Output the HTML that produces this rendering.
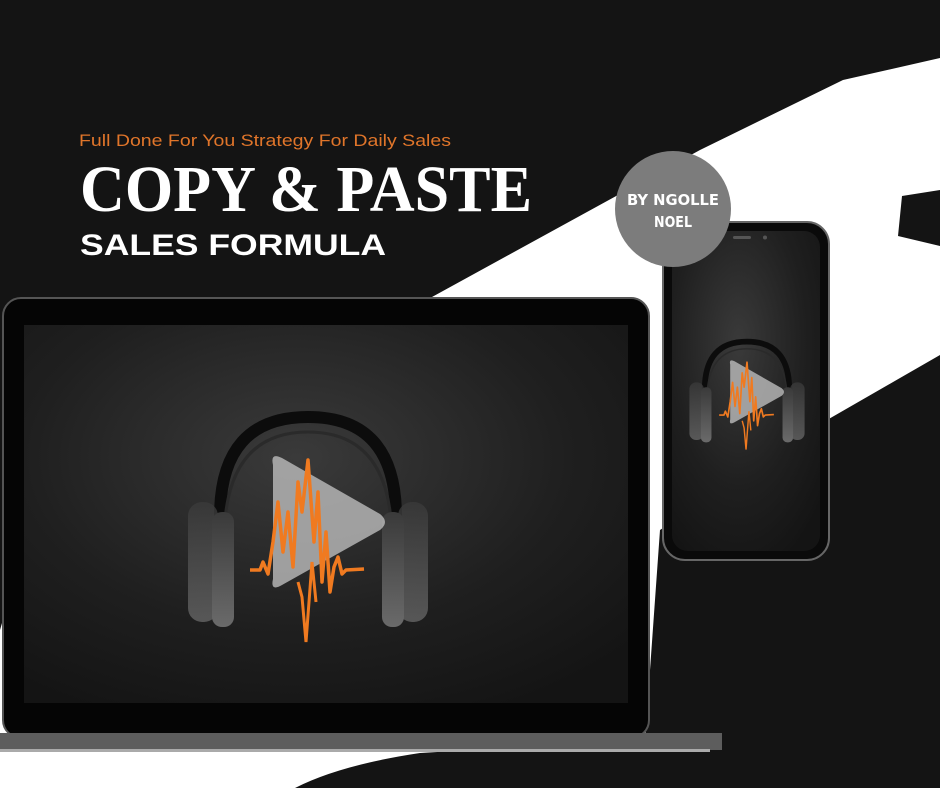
<!DOCTYPE html>
<html><head><meta charset="utf-8"><style>
html,body{margin:0;padding:0;background:#141414;}
body{width:940px;height:788px;overflow:hidden;position:relative;}
svg{position:absolute;left:0;top:0;}
</style></head><body>
<svg width="940" height="788" viewBox="0 0 940 788" xmlns="http://www.w3.org/2000/svg">
<defs>
<radialGradient id="scr" cx="0.45" cy="0.35" r="0.75">
<stop offset="0" stop-color="#3a3a3a"/><stop offset="0.6" stop-color="#1f1f1f"/><stop offset="1" stop-color="#141414"/>
</radialGradient>
<linearGradient id="cup" x1="0" y1="0" x2="0" y2="1">
<stop offset="0" stop-color="#3a3a3a"/><stop offset="1" stop-color="#6a6a6a"/>
</linearGradient>
<g id="icon">
<path d="M-88 -5 Q-88 -105 0 -105 Q88 -105 88 -5" fill="none" stroke="#0c0c0c" stroke-width="12"/>
<path d="M-84 20 Q-84 -90 0 -90 Q84 -90 84 20" fill="none" stroke="#2a2a2a" stroke-width="3"/>
<rect x="-120" y="-20" width="30" height="120" rx="14" fill="url(#cup)" opacity="0.75"/>
<rect x="-96" y="-10" width="22" height="115" rx="10" fill="url(#cup)"/>
<rect x="90" y="-20" width="30" height="120" rx="14" fill="url(#cup)" opacity="0.75"/>
<rect x="74" y="-10" width="22" height="115" rx="10" fill="url(#cup)"/>
<path d="M-35 -57 Q-38 -70 -26 -64 L72 -8 Q82 0 72 8 L-26 63 Q-38 70 -35 57 Z" fill="#bdbdbd" opacity="0.8"/>
<path d="M-58 48 L-48 48 L-45 40 L-40 52 L-35 20 L-30 -20 L-25 30 L-20 -10 L-15 45 L-10 -40 L-6 -10 L0 -62 L6 20 L10 -30 L14 60 L18 10 L22 70 L26 45 L30 35 L34 52 L38 48 L56 47" fill="none" stroke="#f07a20" stroke-width="3.5" stroke-linejoin="round"/>
<path d="M-10 60 L-6 75 L-2 120 L4 40 L8 80" fill="none" stroke="#f07a20" stroke-width="3"/>
</g>
</defs>
<!-- white brush band -->
<path d="M432 297 L700 150 L843 80 L940 58 L940 190 L902 196 L898 236 L940 246 L940 355 L827 420 L660 530 L645 740 L420 753 Q340 765 295 788 L0 788 L0 630 L20 560 L150 420 Z" fill="#fff"/>
<!-- laptop -->
<rect x="3" y="298" width="646" height="440" rx="18" fill="#050505" stroke="#555" stroke-width="2"/>
<rect x="24" y="325" width="604" height="378" fill="url(#scr)"/>
<rect x="0" y="733" width="722" height="17" fill="#5d5d5d"/>
<rect x="0" y="749" width="710" height="3" fill="#aaa"/>
<use href="#icon" transform="translate(308,522)"/>
<!-- phone -->
<rect x="663" y="222" width="166" height="338" rx="22" fill="#0a0a0a" stroke="#666" stroke-width="2"/>
<rect x="672" y="231" width="148" height="320" rx="16" fill="url(#scr)"/>
<rect x="733" y="236" width="18" height="3" rx="1.5" fill="#555"/>
<circle cx="765" cy="237.5" r="2" fill="#555"/>
<use href="#icon" transform="translate(747,392) scale(0.48)"/>
<!-- circle badge -->
<circle cx="673" cy="209" r="58" fill="#7c7c7c"/>
<text x="673" y="205" text-anchor="middle" font-family="'DejaVu Sans Condensed','Liberation Sans',sans-serif" font-weight="bold" font-size="15" fill="#fff" textLength="92" lengthAdjust="spacingAndGlyphs">BY NGOLLE</text>
<text x="673" y="227" text-anchor="middle" font-family="'DejaVu Sans Condensed','Liberation Sans',sans-serif" font-weight="bold" font-size="15" fill="#fff" textLength="38" lengthAdjust="spacingAndGlyphs">NOEL</text>
<!-- texts -->
<text x="79" y="146" font-family="'Liberation Sans',sans-serif" font-size="17" fill="#e0752a" textLength="372" lengthAdjust="spacingAndGlyphs">Full Done For You Strategy For Daily Sales</text>
<text x="80" y="211" font-family="'Liberation Serif',serif" font-weight="bold" font-size="66" fill="#fff" textLength="452" lengthAdjust="spacingAndGlyphs">COPY &amp; PASTE</text>
<text x="80" y="255" font-family="'Liberation Sans',sans-serif" font-weight="bold" font-size="30" fill="#fff" textLength="306" lengthAdjust="spacingAndGlyphs">SALES FORMULA</text>
</svg>
</body></html>
